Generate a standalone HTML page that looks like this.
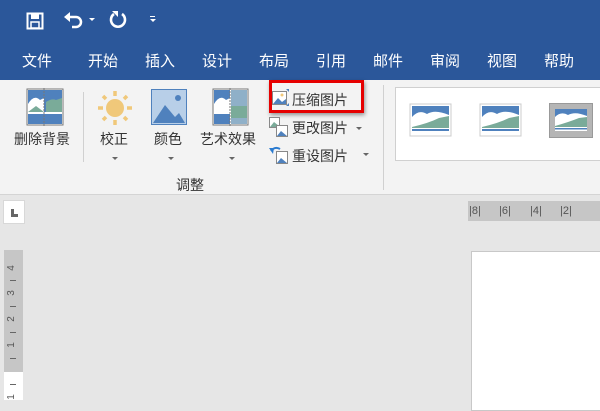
<!DOCTYPE html><html><head><meta charset="utf-8"><style>
*{margin:0;padding:0;box-sizing:border-box}
body{width:600px;height:400px;overflow:hidden;background:#e6e6e6;font-family:"Liberation Sans","Noto Sans CJK SC",sans-serif;position:relative}
.a{position:absolute}
.tab{position:absolute;top:50px;color:#fff;font-size:15px}
.lbl{position:absolute;font-size:14px;color:#333;white-space:nowrap}
.arr{position:absolute;width:0;height:0;border-left:3px solid transparent;border-right:3px solid transparent;border-top:3px solid #666}
.rn{position:absolute;font-size:11px;color:#555;line-height:11px}
.vn{position:absolute;left:9px;font-size:10px;color:#555;transform:rotate(-90deg);line-height:10px}
.vt{position:absolute;left:10px;width:6px;height:1px;background:#666}
</style></head><body>
<div class="a" style="left:0;top:0;width:600px;height:80px;background:#2b579a"></div>
<svg class="a" style="left:26px;top:12px" width="18" height="18" viewBox="0 0 18 18"><rect x="1.5" y="1.5" width="15" height="15" fill="none" stroke="#fff" stroke-width="2"/><rect x="5" y="2" width="8" height="5" fill="#fff"/><rect x="5" y="10" width="8" height="6" fill="none" stroke="#fff" stroke-width="1.5"/></svg>
<svg class="a" style="left:63px;top:11px" width="22" height="20" viewBox="0 0 22 20"><path d="M4 6 H13 A5 5 0 0 1 13 16 H9" fill="none" stroke="#fff" stroke-width="2.5"/><path d="M1 6 L7 1 V11 Z" fill="#fff"/></svg>
<div class="arr" style="left:89px;top:18px;border-top-color:#fff"></div>
<svg class="a" style="left:108px;top:10px" width="20" height="20" viewBox="0 0 20 20"><path d="M6 4 A7 7 0 1 0 14 4" fill="none" stroke="#fff" stroke-width="2.6"/><path d="M4 1 L10 1 L10 7 Z" fill="#fff"/></svg>
<div class="a" style="left:150px;top:16px;width:5px;height:1px;background:#fff"></div>
<div class="arr" style="left:150px;top:19px;border-top-color:#fff"></div>
<div class="tab" style="left:22px">文件</div><div class="tab" style="left:88px">开始</div><div class="tab" style="left:145px">插入</div><div class="tab" style="left:202px">设计</div><div class="tab" style="left:259px">布局</div><div class="tab" style="left:316px">引用</div><div class="tab" style="left:373px">邮件</div><div class="tab" style="left:430px">审阅</div><div class="tab" style="left:487px">视图</div><div class="tab" style="left:544px">帮助</div>
<div class="a" style="left:0;top:80px;width:600px;height:115px;background:#f3f3f3;border-bottom:1px solid #d4d4d4"></div>
<svg class="a" style="left:26px;top:88px" width="38" height="38" viewBox="0 0 38 38"><rect x="1" y="1" width="36" height="36" fill="#fff" stroke="#777"/><rect x="2" y="2" width="34" height="22" fill="#4f81bd"/><path d="M2 16 Q8 6 14 12 L18 10 V24 H2Z" fill="#fff"/><path d="M20 24 V14 Q26 10 30 12 L36 10 V24Z" fill="#7aab99"/><path d="M2 24 L10 18 L18 24Z" fill="#7aab99"/><rect x="2" y="26" width="34" height="10" fill="#4f81bd"/><line x1="18" y1="0" x2="18" y2="38" stroke="#777" stroke-dasharray="2 1"/></svg>
<div class="lbl" style="left:14px;top:129px">删除背景</div>
<div class="a" style="left:83px;top:92px;width:1px;height:70px;background:#d0d0d0"></div>
<svg class="a" style="left:96px;top:89px" width="38" height="38" viewBox="0 0 38 38"><circle cx="19" cy="19" r="9" fill="#f0c87a"/><g stroke="#f0c87a" stroke-width="3.5"><line x1="19" y1="2" x2="19" y2="7"/><line x1="19" y1="31" x2="19" y2="36"/><line x1="2" y1="19" x2="7" y2="19"/><line x1="31" y1="19" x2="36" y2="19"/><line x1="7" y1="7" x2="10" y2="10"/><line x1="28" y1="28" x2="31" y2="31"/><line x1="7" y1="31" x2="10" y2="28"/><line x1="28" y1="10" x2="31" y2="7"/></g></svg>
<div class="lbl" style="left:100px;top:129px">校正</div><div class="arr" style="left:112px;top:157px"></div>
<svg class="a" style="left:151px;top:89px" width="36" height="36" viewBox="0 0 36 36"><rect x=".5" y=".5" width="35" height="35" fill="#b8cfe8" stroke="#4f81bd"/><circle cx="27" cy="9" r="3" fill="#4f81bd"/><path d="M2 34 L14 16 L24 28 L28 24 L34 34Z" fill="#4f81bd"/></svg>
<div class="lbl" style="left:154px;top:129px">颜色</div><div class="arr" style="left:168px;top:157px"></div>
<svg class="a" style="left:212px;top:88px" width="37" height="38" viewBox="0 0 37 38"><rect x="1" y="1" width="35" height="36" fill="#fff" stroke="#777"/><rect x="2" y="2" width="16" height="22" fill="#4f81bd"/><path d="M2 16 Q8 6 14 12 L18 10 V24 H2Z" fill="#fff"/><rect x="2" y="26" width="16" height="10" fill="#4f81bd"/><rect x="19" y="2" width="16" height="34" fill="#8fb0c8"/><rect x="19" y="18" width="16" height="12" fill="#7aab99"/><line x1="18" y1="0" x2="18" y2="38" stroke="#777" stroke-dasharray="2 1"/></svg>
<div class="lbl" style="left:200px;top:129px">艺术效果</div><div class="arr" style="left:229px;top:157px"></div>
<div class="lbl" style="left:176px;top:175px">调整</div>
<div class="a" style="left:269px;top:80px;width:95px;height:33px;border:3px solid #e60000;box-shadow:1px 2px 4px rgba(0,0,0,.4)"></div>
<svg class="a" style="left:272px;top:89px" width="18" height="17" viewBox="0 0 18 17"><rect x="0.5" y="2.5" width="14" height="13" fill="#fff" stroke="#888"/><path d="M1 15 L6 9 L10 13 L14 10 V15Z" fill="#4f81bd"/><circle cx="10" cy="6" r="1.5" fill="#f0c87a"/><path d="M14 0 l3 0 0 3z M14 17 l3 0 0 -3z" fill="#4f81bd"/></svg>
<div class="lbl" style="left:292px;top:90px">压缩图片</div>
<svg class="a" style="left:269px;top:117px" width="20" height="20" viewBox="0 0 20 20"><rect x="0.5" y="0.5" width="10" height="10" fill="#fff" stroke="#888"/><path d="M1 10 L5 5 L10 9 V10Z" fill="#7aab99"/><rect x="7.5" y="8.5" width="11" height="11" fill="#fff" stroke="#888"/><path d="M8 19 L12 14 L18 19Z" fill="#4f81bd"/></svg>
<div class="lbl" style="left:292px;top:118px">更改图片</div><div class="arr" style="left:356px;top:127px"></div>
<svg class="a" style="left:269px;top:145px" width="20" height="20" viewBox="0 0 20 20"><path d="M2 6 Q6 1 11 4" fill="none" stroke="#2b7bd0" stroke-width="2"/><path d="M0 3 L4 9 L5 3Z" fill="#2b7bd0"/><rect x="7.5" y="6.5" width="11" height="12" fill="#fff" stroke="#888"/><path d="M8 18 L12 13 L18 18Z" fill="#4f81bd"/></svg>
<div class="lbl" style="left:292px;top:146px">重设图片</div><div class="arr" style="left:363px;top:153px"></div>
<div class="a" style="left:383px;top:85px;width:1px;height:105px;background:#d0d0d0"></div>
<div class="a" style="left:395px;top:87px;width:210px;height:74px;background:#fff;border:1px solid #d0d0d0"></div>
<svg class="a" style="left:409px;top:103px" width="44" height="35" viewBox="0 0 44 35"><rect x="1" y="1" width="41" height="32" fill="#fff" stroke="#ccc"/><rect x="3" y="3" width="37" height="28" fill="#4f81bd"/><path d="M3 14 Q10 6 18 11 Q26 6 40 12 V31 H3Z" fill="#fff"/><path d="M3 24 Q20 20 30 15 L40 13 V25 H3Z" fill="#7aab99"/><rect x="3" y="26" width="37" height="2" fill="#4f81bd"/></svg>
<svg class="a" style="left:479px;top:103px" width="44" height="35" viewBox="0 0 44 35"><rect x="1" y="1" width="41" height="32" fill="#fff" stroke="#ccc"/><rect x="3" y="3" width="37" height="28" fill="#4f81bd"/><path d="M3 14 Q10 6 18 11 Q26 6 40 12 V31 H3Z" fill="#fff"/><path d="M3 24 Q20 20 30 15 L40 13 V25 H3Z" fill="#7aab99"/><rect x="3" y="26" width="37" height="2" fill="#4f81bd"/></svg>
<svg class="a" style="left:549px;top:103px" width="44" height="35" viewBox="0 0 44 35"><rect x="0.5" y="0.5" width="43" height="34" fill="#b5b5b5" stroke="#999"/><rect x="6" y="6" width="32" height="22" fill="#4f81bd"/><path d="M6 14 Q12 8 19 12 Q26 8 38 13 V28 H6Z" fill="#fff"/><path d="M6 23 Q20 19 30 15 L38 14 V24 H6Z" fill="#7aab99"/><rect x="6" y="25" width="32" height="1.5" fill="#4f81bd"/></svg>
<div class="a" style="left:3px;top:200px;width:22px;height:24px;background:#fff;border:1px solid #d8d8d8"></div>
<div class="a" style="left:11px;top:209px;width:3px;height:8px;background:#666"></div><div class="a" style="left:11px;top:214px;width:7px;height:3px;background:#666"></div>
<div class="a" style="left:468px;top:201px;width:132px;height:20px;background:#c6c6c6"></div>
<div class="rn" style="left:469px;top:206px">|8|</div><div class="rn" style="left:499px;top:206px">|6|</div><div class="rn" style="left:530px;top:206px">|4|</div><div class="rn" style="left:560px;top:206px">|2|</div>
<div class="a" style="left:4px;top:250px;width:19px;height:122px;background:#c6c6c6"></div>
<div class="a" style="left:4px;top:372px;width:19px;height:28px;background:#fff"></div>
<div class="vn" style="top:263px">4</div><div class="vt" style="top:280px"></div>
<div class="vn" style="top:288px">3</div><div class="vt" style="top:306px"></div>
<div class="vn" style="top:314px">2</div><div class="vt" style="top:332px"></div>
<div class="vn" style="top:340px">1</div><div class="vt" style="top:358px"></div>
<div class="vt" style="top:384px"></div><div class="vn" style="top:392px">1</div>
<div class="a" style="left:471px;top:251px;width:140px;height:160px;background:#fff;border:1px solid #c8c8c8"></div>
</body></html>
